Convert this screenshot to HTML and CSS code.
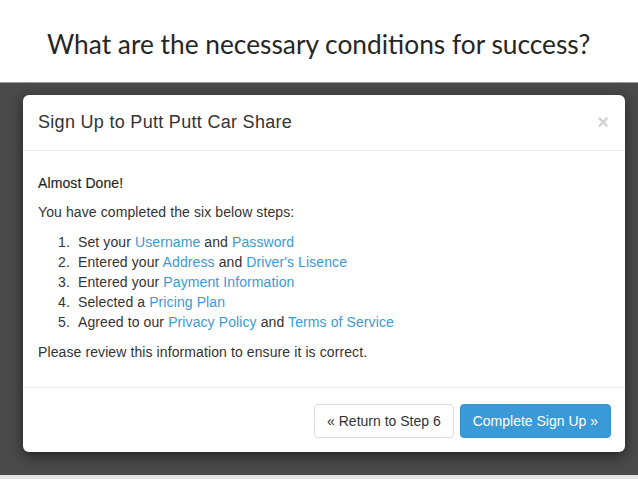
FILE: index.html
```html
<!DOCTYPE html>
<html>
<head>
<meta charset="utf-8">
<link rel="stylesheet" href="styles.css">
</head>
<body>
<div class="slide-title">What are the necessary conditions for success?</div>
<div class="stage">
  <div class="modal">
    <div class="modal-header">
      <span class="modal-title">Sign Up to Putt Putt Car Share</span>
      <span class="close">×</span>
    </div>
    <div class="modal-body">
      <p class="lead">Almost Done!</p>
      <p>You have completed the six below steps:</p>
      <ol class="steps">
        <li>Set your <a>Username</a> and <a>Password</a></li>
        <li>Entered your <a>Address</a> and <a>Driver's Lisence</a></li>
        <li>Entered your <a>Payment Information</a></li>
        <li>Selected a <a>Pricing Plan</a></li>
        <li>Agreed to our <a>Privacy Policy</a> and <a>Terms of Service</a></li>
      </ol>
      <p class="last">Please review this information to ensure it is correct.</p>
    </div>
    <div class="modal-footer">
      <button class="btn btn-default">« Return to Step 6</button>
      <button class="btn btn-primary">Complete Sign Up »</button>
    </div>
  </div>
</div>
</body>
</html>
```

FILE: styles.css
```css
html, body {
  margin: 0;
  padding: 0;
  background: #e4e4e4;
}
body {
  width: 638px;
  height: 479px;
  overflow: hidden;
  font-family: "Liberation Sans", Arial, sans-serif;
}
.slide-title {
  box-sizing: border-box;
  height: 83px;
  padding: 28px 0 0 47px;
  background: #fff;
  border-bottom: 1px solid #9c9c9c;
  font-family: Lato, "Open Sans", sans-serif;
  font-size: 26.3px;
  line-height: 32px;
  color: #262626;
}
.stage {
  box-sizing: border-box;
  height: 392px;
  background: #4a4a4a;
  padding: 12px 13px 0 23px;
}
.modal {
  background: #fff;
  border-radius: 6px;
  box-shadow: 0 4px 14px rgba(0, 0, 0, 0.55);
  color: #333;
}
.modal-header {
  box-sizing: border-box;
  height: 56px;
  padding: 0 15px;
  display: flex;
  align-items: center;
  justify-content: space-between;
  border-bottom: 1px solid #eeeeee;
}
.modal-title {
  font-size: 18px;
  letter-spacing: 0.3px;
  color: #333;
  padding-bottom: 1px;
}
.close {
  font-size: 20px;
  font-weight: bold;
  color: #d2d2d2;
  line-height: 1;
  padding-right: 1px;
  padding-bottom: 2px;
}
.modal-body {
  padding: 22px 15px 25px;
  font-size: 14px;
  letter-spacing: 0.1px;
  line-height: 20px;
}
.modal-body p {
  margin: 0 0 10px;
}
.modal-body p.lead {
  margin-bottom: 9px;
  color: #1e1e1e;
  -webkit-text-stroke: 0.15px #1e1e1e;
}
.modal-body p.last {
  margin: 0;
}
.steps {
  margin: 0 0 10px;
  padding-left: 40px;
  list-style: none;
  counter-reset: step;
}
.steps li {
  counter-increment: step;
}
.steps li::before {
  content: counter(step) ".";
  display: inline-block;
  width: 20px;
  margin-left: -20px;
}
a {
  color: #3b9ad6;
  text-decoration: none;
}
.modal-footer {
  display: flex;
  justify-content: flex-end;
  gap: 6px;
  padding: 16px 14px 14px;
  border-top: 1px solid #eeeeee;
}
.btn {
  box-sizing: border-box;
  height: 34px;
  padding: 0 12px;
  font-family: "Liberation Sans", Arial, sans-serif;
  font-size: 14px;
  border-radius: 4px;
  border: 1px solid #dcdcdc;
  background: #fff;
  color: #333;
}
.btn-primary {
  background: #3a9ad7;
  border-color: #3592cf;
  color: #fff;
}
```
